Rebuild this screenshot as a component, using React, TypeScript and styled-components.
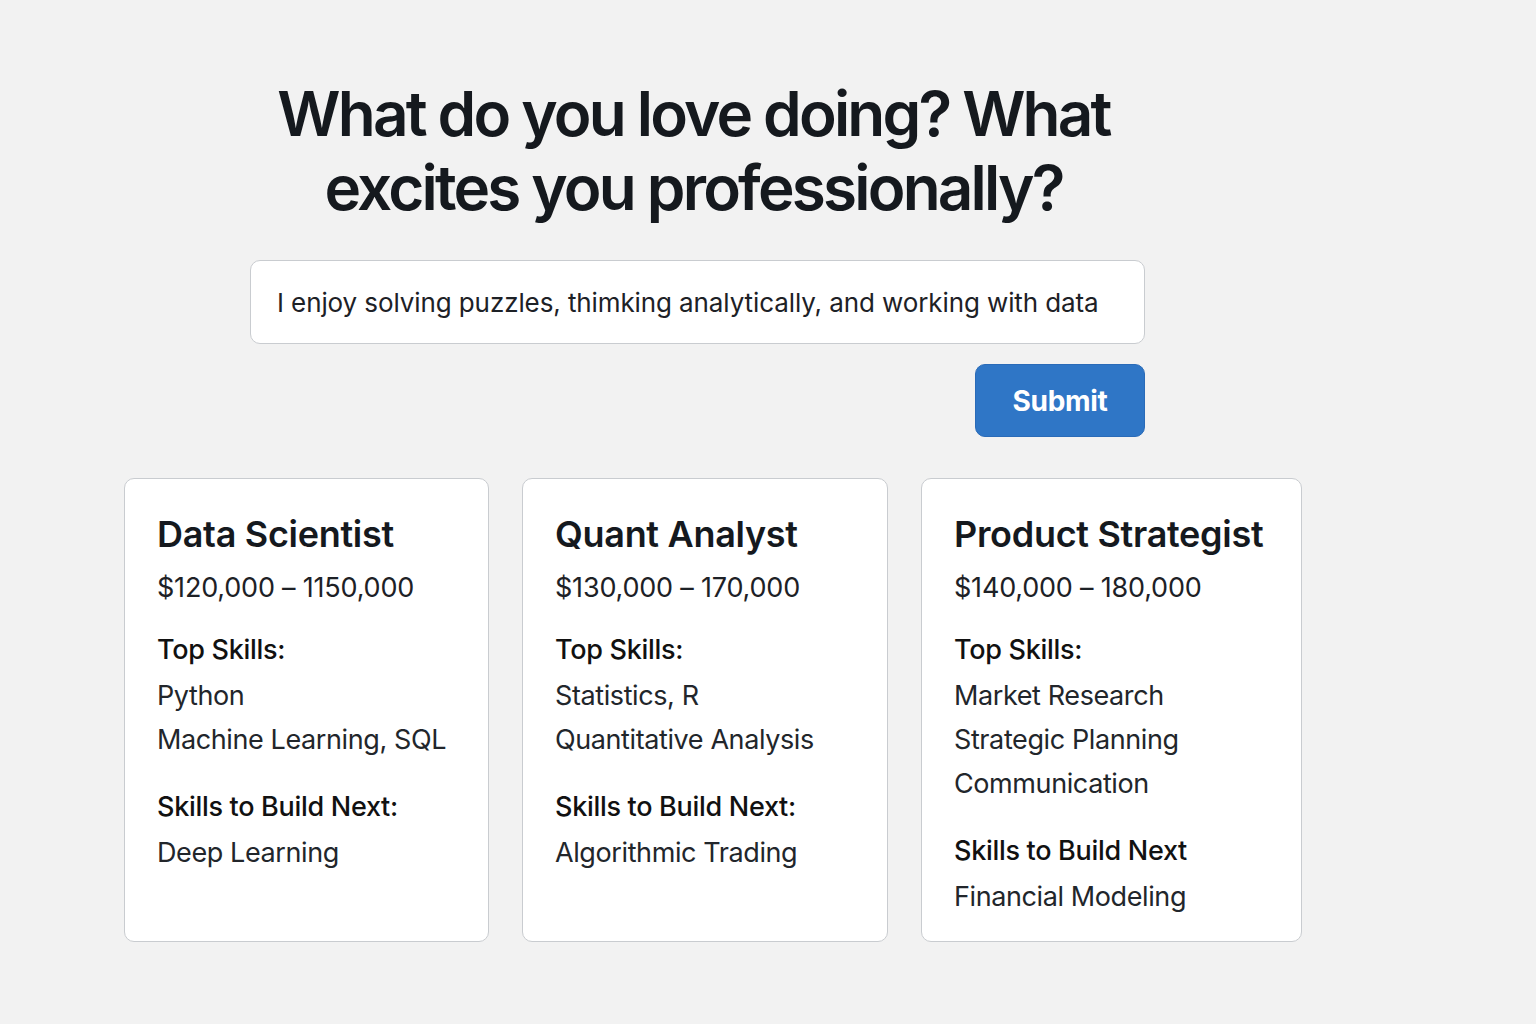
import React from "react";
import styled, { createGlobalStyle } from "styled-components";

const GlobalStyle = createGlobalStyle`
  html, body {
    margin: 0;
    padding: 0;
    background: #f2f2f2;
  }
  body {
    font-family: Inter, "Noto Sans", "Liberation Sans", sans-serif;
    color: #15191e;
  }
`;

const Page = styled.main`
  min-height: 1024px;
  box-sizing: border-box;
  padding: 77px 0 0 124px;
  display: flex;
  flex-direction: column;
`;

const Top = styled.section`
  width: 895px;
  margin-left: 126px;
  display: flex;
  flex-direction: column;
`;

const Heading = styled.h1`
  margin: 0;
  font-size: 62px;
  line-height: 74px;
  font-weight: 600;
  letter-spacing: -2.8px;
  text-align: center;
  white-space: nowrap;
  color: #15191e;
  padding-right: 8px;
`;

const Input = styled.input`
  margin-top: 35px;
  height: 84px;
  box-sizing: border-box;
  border: 1px solid #c9ccd0;
  border-radius: 10px;
  background: #fff;
  padding: 0 26px;
  font-family: Inter, "Noto Sans", sans-serif;
  font-size: 26px;
  font-weight: 400;
  letter-spacing: -0.1px;
  color: #1d2126;
  outline: none;
`;

const Actions = styled.div`
  display: flex;
  justify-content: flex-end;
  margin-top: 20px;
`;

const Button = styled.button`
  width: 170px;
  height: 73px;
  border: 1px solid #2a6bb8;
  border-radius: 10px;
  background: #2f76c6;
  color: #fff;
  font-family: Inter, "Noto Sans", sans-serif;
  font-size: 28px;
  font-weight: 700;
  letter-spacing: -0.3px;
  cursor: pointer;
`;

const Cards = styled.section`
  display: flex;
  gap: 33px;
  margin-top: 41px;
  align-items: stretch;
`;

const Card = styled.article<{ $w: number }>`
  width: ${(p) => p.$w}px;
  height: 464px;
  box-sizing: border-box;
  background: #fff;
  border: 1px solid #c9ccd0;
  border-radius: 10px;
  padding: 30px 20px 0 32px;
  display: flex;
  flex-direction: column;
`;

const Title = styled.h2`
  margin: 0;
  font-size: 36px;
  line-height: 50px;
  font-weight: 600;
  letter-spacing: -0.3px;
  color: #15191e;
`;

const Salary = styled.div`
  font-size: 27px;
  line-height: 44px;
  margin-top: 7px;
  letter-spacing: -0.2px;
  color: #1d2126;
`;

const Label = styled.h3`
  margin: 18px 0 2px;
  font-size: 27px;
  line-height: 44px;
  font-weight: 500;
  letter-spacing: -0.3px;
  color: #111;
`;

const Item = styled.div`
  font-size: 27px;
  line-height: 44px;
  font-weight: 400;
  letter-spacing: -0.4px;
  color: #22262b;
`;

const Group = styled.div`
  & + & {
    margin-top: 5px;
  }
`;

type Job = {
  title: string;
  salary: string;
  width: number;
  top: string[];
  nextLabel: string;
  next: string[];
};

const jobs: Job[] = [
  {
    title: "Data Scientist",
    salary: "$120,000 – 1150,000",
    width: 365,
    top: ["Python", "Machine Learning, SQL"],
    nextLabel: "Skills to Build Next:",
    next: ["Deep Learning"],
  },
  {
    title: "Quant Analyst",
    salary: "$130,000 – 170,000",
    width: 366,
    top: ["Statistics, R", "Quantitative Analysis"],
    nextLabel: "Skills to Build Next:",
    next: ["Algorithmic Trading"],
  },
  {
    title: "Product Strategist",
    salary: "$140,000 – 180,000",
    width: 381,
    top: ["Market Research", "Strategic Planning", "Communication"],
    nextLabel: "Skills to Build Next",
    next: ["Financial Modeling"],
  },
];

export default function App() {
  return (
    <>
      <GlobalStyle />
      <Page>
        <Top>
          <Heading>
            What do you love doing? What
            <br />
            excites you professionally?
          </Heading>
          <Input
            defaultValue="I enjoy solving puzzles, thimking analytically, and working with data"
            aria-label="What do you love doing?"
          />
          <Actions>
            <Button type="button">Submit</Button>
          </Actions>
        </Top>
        <Cards>
          {jobs.map((j) => (
            <Card key={j.title} $w={j.width}>
              <Title>{j.title}</Title>
              <Salary>{j.salary}</Salary>
              <Group>
                <Label>Top Skills:</Label>
                {j.top.map((s) => (
                  <Item key={s}>{s}</Item>
                ))}
              </Group>
              <Group>
                <Label>{j.nextLabel}</Label>
                {j.next.map((s) => (
                  <Item key={s}>{s}</Item>
                ))}
              </Group>
            </Card>
          ))}
        </Cards>
      </Page>
    </>
  );
}
